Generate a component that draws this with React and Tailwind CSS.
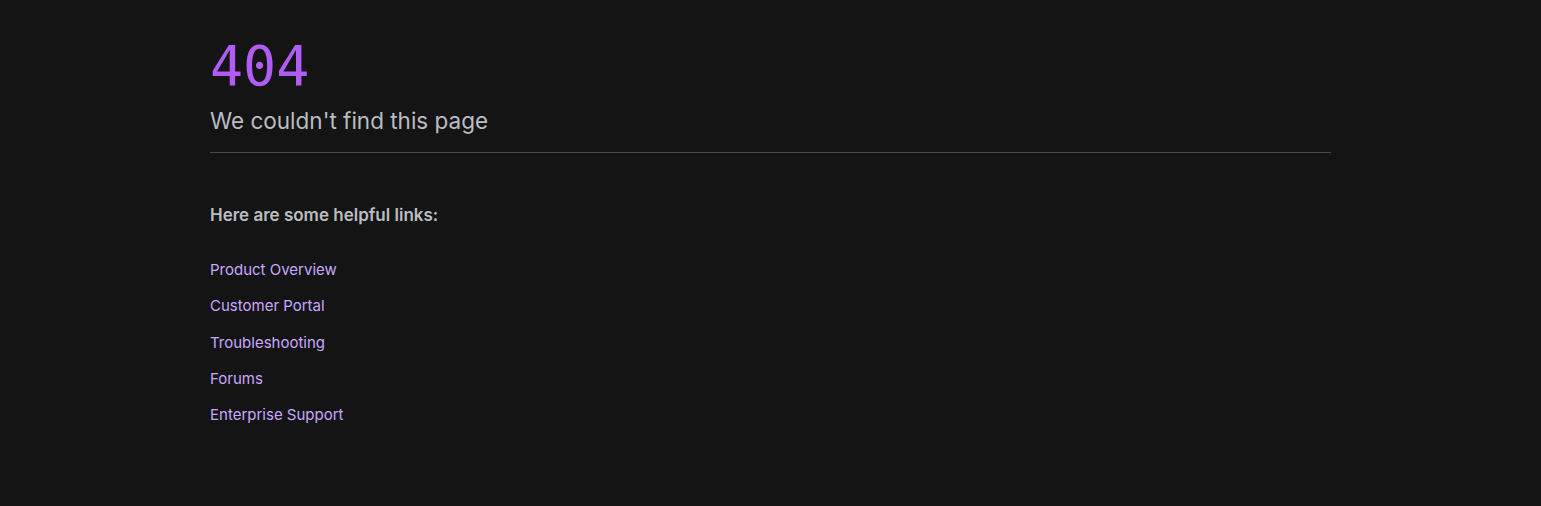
const links = [
  "Product Overview",
  "Customer Portal",
  "Troubleshooting",
  "Forums",
  "Enterprise Support",
];

export default function App() {
  return (
    <div className="min-h-[506px] bg-[#141414] font-['Inter','Noto_Sans',sans-serif]">
      <div className="mx-auto w-[1121px] pt-[30px]">
        <h1 className="font-['DejaVu_Sans_Mono',monospace] text-[55px] leading-[72px] text-[#b05cf5]">
          404
        </h1>
        <p className="mt-[3px] text-[22.5px] leading-[32px] text-[#babec2]">
          We couldn't find this page
        </p>
        <hr className="mt-[15px] border-t border-[#4a4a4a]" />

        <h2 className="mt-[50px] text-[17px] font-semibold leading-[24px] text-[#babec2]">
          Here are some helpful links:
        </h2>
        <ul className="mt-[32px] flex flex-col gap-[14.3px]">
          {links.map((l) => (
            <li key={l} className="text-[15px] leading-[22px]">
              <a href="#" className="text-[#c9a8ff]">
                {l}
              </a>
            </li>
          ))}
        </ul>
      </div>
    </div>
  );
}
